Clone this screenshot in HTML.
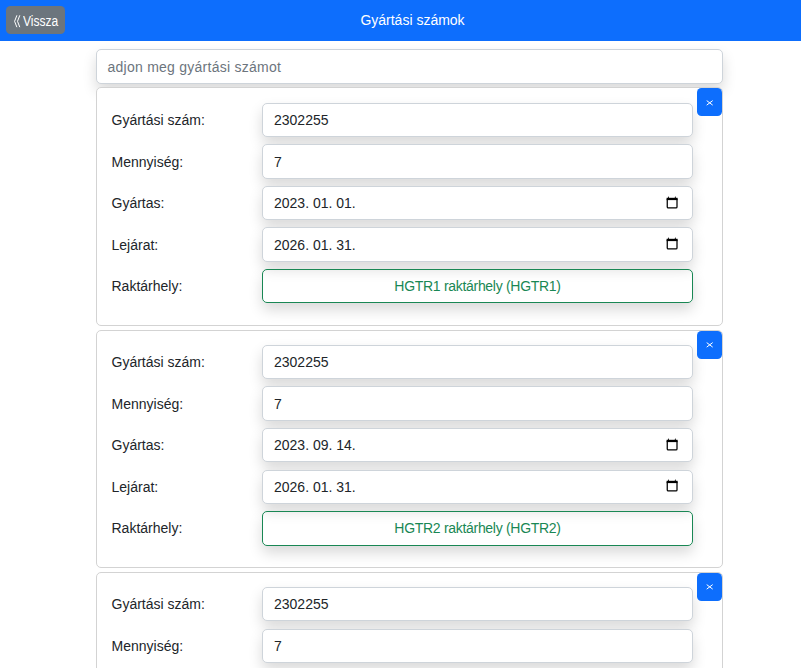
<!DOCTYPE html>
<html lang="hu">
<head>
<meta charset="utf-8">
<title>Gyártási számok</title>
<style>
html,body{margin:0;padding:0;background:#fff;}
body{width:801px;height:668px;overflow:hidden;position:relative;font-family:"Liberation Sans",sans-serif;font-size:14px;color:#212529;}
.hdr{position:absolute;left:0;top:0;width:801px;height:41px;background:#0d6efd;}
.back{position:absolute;left:6px;top:6px;width:59px;height:28px;background:#6c757d;border-radius:4.5px;}
.back svg{position:absolute;left:7px;top:8px;}
.back span{position:absolute;left:16.5px;top:6.8px;line-height:16px;color:#fff;font-size:14px;transform:scaleX(0.86);transform-origin:0 0;white-space:nowrap;}
.title{position:absolute;left:0;top:11.5px;width:825px;text-align:center;color:#fff;font-size:14px;line-height:16px;white-space:nowrap;}
.search{position:absolute;left:96px;top:49px;width:625px;height:33px;border:1px solid #ced4da;border-radius:5px;box-shadow:0 7px 14px rgba(0,0,0,.15);background:#fff;}
.search span{position:absolute;left:10.5px;top:9px;line-height:16px;color:#6c757d;letter-spacing:0.25px;white-space:nowrap;}
.card{position:absolute;left:96px;width:625px;border:1px solid #d3d3d3;border-radius:5px;background:#fff;}
.t{position:absolute;line-height:16px;white-space:nowrap;}
.lbl{left:111.5px;}
.val{left:274px;}
.inp{position:absolute;left:262px;width:429px;border:1px solid #ced4da;border-radius:5px;box-shadow:0 7px 14px rgba(0,0,0,.15);background:#fff;}
.cal{position:absolute;left:666px;}
.btn{position:absolute;left:262px;width:429px;border:1px solid #198754;border-radius:5px;box-shadow:0 7px 14px rgba(0,0,0,.15);}
.gt{left:262px;width:431px;text-align:center;color:#198754;letter-spacing:-0.3px;}
.x{position:absolute;left:697px;width:25px;height:28px;background:#0d6efd;border-radius:4.5px;}
.xs{position:absolute;left:706px;}
</style>
</head>
<body>
<div class="hdr">
  <div class="back">
    <svg width="8" height="14" viewBox="0 0 8 14"><path d="M3.9 1.3 L1.6 7.3 L3.9 13.2 M6.8 1.3 L4.5 7.3 L6.8 13.2" fill="none" stroke="#fff" stroke-width="1"/></svg>
    <span>Vissza</span>
  </div>
  <div class="title">Gyártási számok</div>
</div>
<div class="search"><span>adjon meg gyártási számot</span></div>
<div class="card" style="top:87px;height:237px"></div>
<div class="card" style="top:330px;height:236px"></div>
<div class="card" style="top:572px;height:237px"></div>
<div class="inp" style="top:103px;height:32px"></div>
<div class="inp" style="top:144px;height:33px"></div>
<div class="inp" style="top:186px;height:32px"></div>
<svg class="cal" style="top:195px" width="12" height="14" viewBox="0 0 12 14"><rect x="1.25" y="3.6" width="9.75" height="9.3" rx="1" fill="none" stroke="#000" stroke-width="1.25"/><rect x="0.6" y="2.8" width="11" height="2.3" fill="#000"/><path d="M1.8 3L2.4 0.9L3 3zM8.7 3L9.3 0.9L9.9 3z" fill="#000"/></svg>
<div class="inp" style="top:227px;height:33px"></div>
<svg class="cal" style="top:236px" width="12" height="14" viewBox="0 0 12 14"><rect x="1.25" y="3.6" width="9.75" height="9.3" rx="1" fill="none" stroke="#000" stroke-width="1.25"/><rect x="0.6" y="2.8" width="11" height="2.3" fill="#000"/><path d="M1.8 3L2.4 0.9L3 3zM8.7 3L9.3 0.9L9.9 3z" fill="#000"/></svg>
<div class="btn" style="top:269px;height:32px"></div>
<div class="x" style="top:88px"></div>
<svg class="xs" style="top:99.5px" width="8" height="7" viewBox="0 0 8 7"><path d="M0.7 0.6L6.7 5.1M6.7 0.6L0.7 5.1" stroke="#fff" stroke-width="1" fill="none"/></svg>
<div class="t lbl" style="top:112px">Gyártási szám:</div>
<div class="t val" style="top:112px">2302255</div>
<div class="t lbl" style="top:154px">Mennyiség:</div>
<div class="t val" style="top:154px">7</div>
<div class="t lbl" style="top:195px">Gyártas:</div>
<div class="t val" style="top:195px">2023. 01. 01.</div>
<div class="t lbl" style="top:237px">Lejárat:</div>
<div class="t val" style="top:237px">2026. 01. 31.</div>
<div class="t lbl" style="top:278px">Raktárhely:</div>
<div class="t gt" style="top:278px">HGTR1 raktárhely (HGTR1)</div>
<div class="inp" style="top:345px;height:32px"></div>
<div class="inp" style="top:386px;height:33px"></div>
<div class="inp" style="top:428px;height:32px"></div>
<svg class="cal" style="top:437px" width="12" height="14" viewBox="0 0 12 14"><rect x="1.25" y="3.6" width="9.75" height="9.3" rx="1" fill="none" stroke="#000" stroke-width="1.25"/><rect x="0.6" y="2.8" width="11" height="2.3" fill="#000"/><path d="M1.8 3L2.4 0.9L3 3zM8.7 3L9.3 0.9L9.9 3z" fill="#000"/></svg>
<div class="inp" style="top:470px;height:32px"></div>
<svg class="cal" style="top:478px" width="12" height="14" viewBox="0 0 12 14"><rect x="1.25" y="3.6" width="9.75" height="9.3" rx="1" fill="none" stroke="#000" stroke-width="1.25"/><rect x="0.6" y="2.8" width="11" height="2.3" fill="#000"/><path d="M1.8 3L2.4 0.9L3 3zM8.7 3L9.3 0.9L9.9 3z" fill="#000"/></svg>
<div class="btn" style="top:511px;height:33px"></div>
<div class="x" style="top:331px"></div>
<svg class="xs" style="top:341.5px" width="8" height="7" viewBox="0 0 8 7"><path d="M0.7 0.6L6.7 5.1M6.7 0.6L0.7 5.1" stroke="#fff" stroke-width="1" fill="none"/></svg>
<div class="t lbl" style="top:354px">Gyártási szám:</div>
<div class="t val" style="top:354px">2302255</div>
<div class="t lbl" style="top:396px">Mennyiség:</div>
<div class="t val" style="top:396px">7</div>
<div class="t lbl" style="top:437px">Gyártas:</div>
<div class="t val" style="top:437px">2023. 09. 14.</div>
<div class="t lbl" style="top:479px">Lejárat:</div>
<div class="t val" style="top:479px">2026. 01. 31.</div>
<div class="t lbl" style="top:520px">Raktárhely:</div>
<div class="t gt" style="top:520px">HGTR2 raktárhely (HGTR2)</div>
<div class="inp" style="top:587px;height:32px"></div>
<div class="inp" style="top:629px;height:32px"></div>
<div class="x" style="top:573px"></div>
<svg class="xs" style="top:583.5px" width="8" height="7" viewBox="0 0 8 7"><path d="M0.7 0.6L6.7 5.1M6.7 0.6L0.7 5.1" stroke="#fff" stroke-width="1" fill="none"/></svg>
<div class="t lbl" style="top:596px">Gyártási szám:</div>
<div class="t val" style="top:596px">2302255</div>
<div class="t lbl" style="top:638px">Mennyiség:</div>
<div class="t val" style="top:638px">7</div>
</body>
</html>
